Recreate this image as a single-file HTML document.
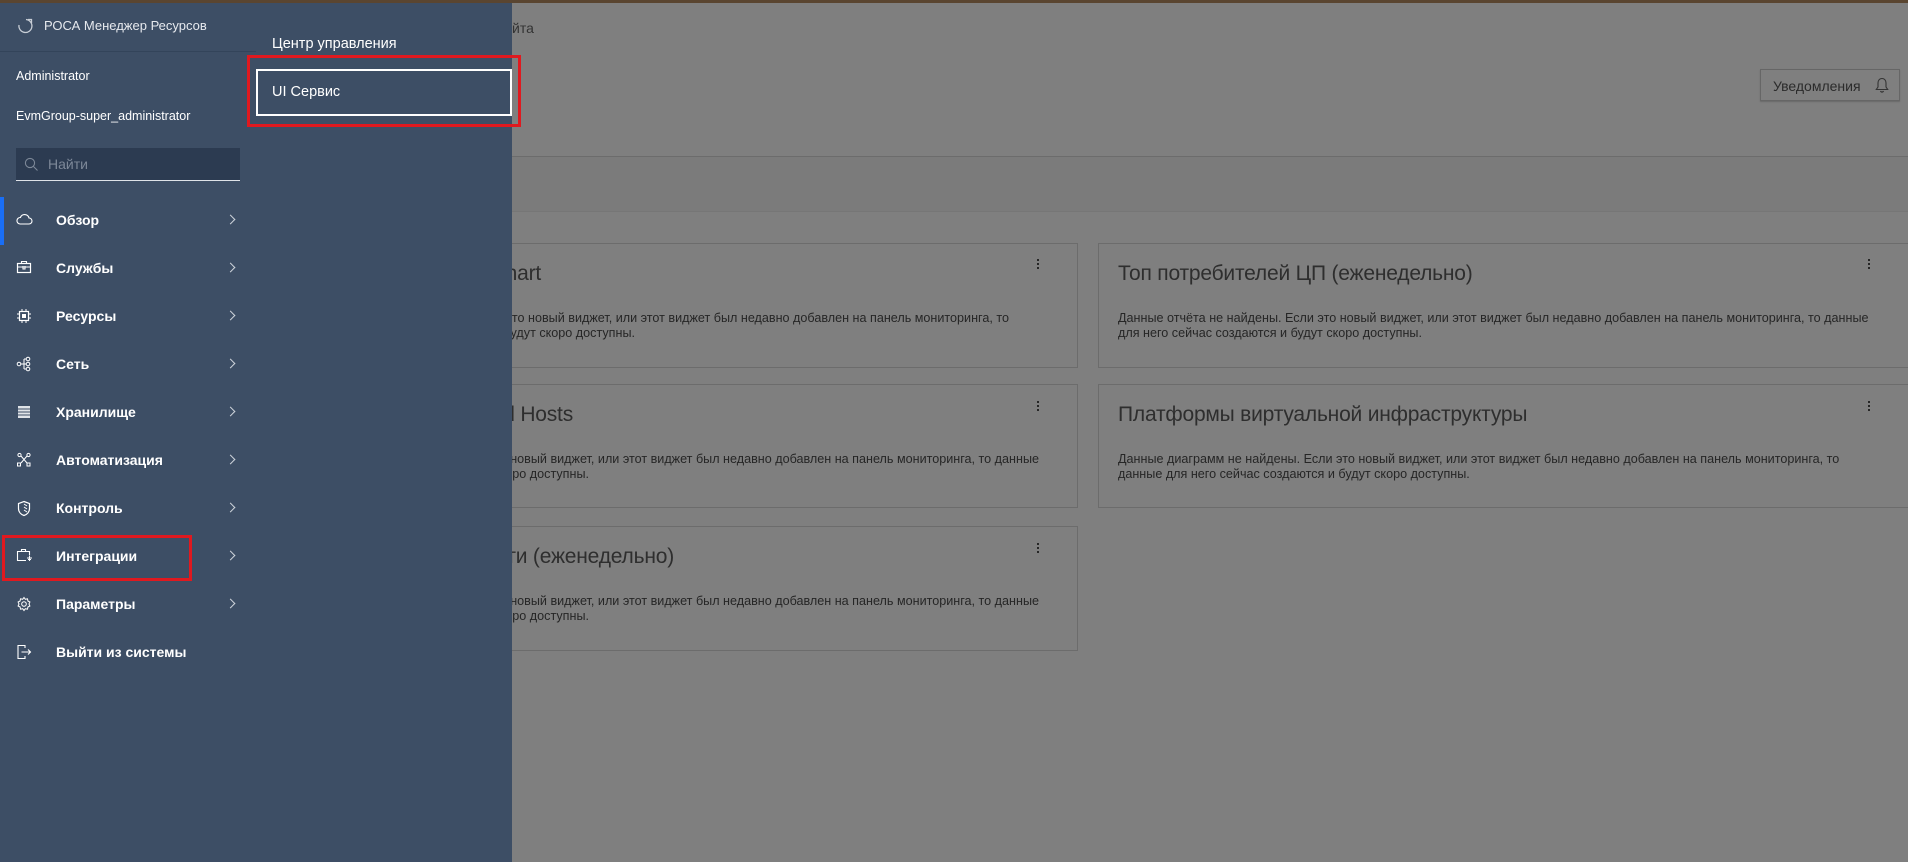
<!DOCTYPE html>
<html><head><meta charset="utf-8"><style>
*{margin:0;padding:0;box-sizing:border-box}
body{width:1908px;height:862px;overflow:hidden;background:#7f7f7f;font-family:"Liberation Sans","Noto Sans CJK SC",sans-serif;position:relative}
.abs{position:absolute;white-space:nowrap}
.topbar{left:0;top:0;width:1908px;height:3px;background:#5a4530}
.hl{position:absolute;height:1px;background:#6f6f6f}
.card{position:absolute;border:1px solid #6c6c6c;background:#7f7f7f}
.ttl{font-size:21px;color:#2e2e2e;font-weight:300;letter-spacing:-0.2px}
.bd{font-size:12.6px;color:#262626;line-height:15px}
.dots{position:absolute;width:3px}
.dots i{display:block;width:2px;height:2px;background:#262626;margin-bottom:2px}
.side{position:absolute;left:0;top:3px;width:512px;height:859px;background:#3d4e65}
.nav{position:absolute;left:0;width:256px;height:48px;color:#fff;font-weight:bold;font-size:14px}
.nav span{position:absolute;left:56px;top:15px}
.nav svg{position:absolute;left:16px;top:15px}
.nav .ch{position:absolute;left:227px;top:19px;width:7px;height:7px;border-top:1.3px solid #cdd3da;border-right:1.3px solid #cdd3da;transform:rotate(45deg)}
</style></head><body>
<div class="abs topbar"></div>
<div class="abs" style="left:512px;top:20px;font-size:14px;color:#333">йта</div>
<div class="abs" style="left:1760px;top:69px;width:140px;height:32px;border:1px solid #666;box-shadow:0 1px 1px #6a6a6a;font-size:14px;color:#2b2b2b;padding:8px 0 0 12px">Уведомления
<svg style="position:absolute;right:10px;top:7px" width="14" height="17" viewBox="0 0 14 17"><path d="M7 1.5C4.5 1.5 3 3.5 3 6v4L1.3 12.5h11.4L11 10V6C11 3.5 9.5 1.5 7 1.5ZM5.5 14a1.6 1.6 0 0 0 3 0" fill="none" stroke="#333" stroke-width="1.1"/></svg></div>
<div class="hl" style="left:0;top:156px;width:1908px;background:#6c6c6c"></div>
<div style="position:absolute;left:0;top:157px;width:1908px;height:54px;background:#7b7b7b"></div>
<div class="hl" style="left:0;top:211px;width:1908px;background:#767676"></div>

<div class="card" style="left:420px;top:243px;width:658px;height:125px"></div>
<div class="card" style="left:1098px;top:243px;width:820px;height:125px"></div>
<div class="card" style="left:420px;top:384px;width:658px;height:124px"></div>
<div class="card" style="left:1098px;top:384px;width:820px;height:124px"></div>
<div class="card" style="left:420px;top:526px;width:658px;height:125px"></div>

<div class="abs ttl" style="right:1367px;top:262px">Vendor and Guest OS Chart</div>
<div class="abs bd" style="right:899px;top:311px">Если это новый виджет, или этот виджет был недавно добавлен на панель мониторинга, то</div>
<div class="abs bd" style="right:1273px;top:326px">данные для него сейчас создаются и будут скоро доступны.</div>
<div class="abs ttl" style="left:1118px;top:262px">Топ потребителей ЦП (еженедельно)</div>
<div class="abs bd" style="left:1118px;top:311px">Данные отчёта не найдены. Если это новый виджет, или этот виджет был недавно добавлен на панель мониторинга, то данные<br>для него сейчас создаются и будут скоро доступны.</div>

<div class="abs ttl" style="right:1335px;top:403px">Guests and Hosts</div>
<div class="abs bd" style="right:869px;top:452px">Если это новый виджет, или этот виджет был недавно добавлен на панель мониторинга, то данные</div>
<div class="abs bd" style="right:1319px;top:467px">создаются и будут скоро доступны.</div>
<div class="abs ttl" style="left:1118px;top:403px">Платформы виртуальной инфраструктуры</div>
<div class="abs bd" style="left:1118px;top:452px">Данные диаграмм не найдены. Если это новый виджет, или этот виджет был недавно добавлен на панель мониторинга, то<br>данные для него сейчас создаются и будут скоро доступны.</div>

<div class="abs ttl" style="right:1234px;top:545px">Использование памяти (еженедельно)</div>
<div class="abs bd" style="right:869px;top:594px">Если это новый виджет, или этот виджет был недавно добавлен на панель мониторинга, то данные</div>
<div class="abs bd" style="right:1319px;top:609px">создаются и будут скоро доступны.</div>

<div class="dots" style="left:1037px;top:259px"><i></i><i></i><i></i></div>
<div class="dots" style="left:1868px;top:259px"><i></i><i></i><i></i></div>
<div class="dots" style="left:1037px;top:401px"><i></i><i></i><i></i></div>
<div class="dots" style="left:1868px;top:401px"><i></i><i></i><i></i></div>
<div class="dots" style="left:1037px;top:543px"><i></i><i></i><i></i></div>

<div class="side">
 <svg style="position:absolute;left:16px;top:14px" width="18" height="18" viewBox="0 0 18 18"><path d="M10 2.5A6.5 6.5 0 1 1 3 8" fill="none" stroke="#c8ced6" stroke-width="1.3"/><path d="M12 2.5h3.5V6" fill="none" stroke="#c8ced6" stroke-width="1.3"/></svg>
 <div class="abs" style="left:44px;top:15px;font-size:13px;color:#e6e9ee">РОСА Менеджер Ресурсов</div>
 <div style="position:absolute;left:0;top:48px;width:256px;height:1px;background:#33445a"></div>
 <div class="abs" style="left:16px;top:66px;font-size:12.5px;color:#fff">Administrator</div>
 <div class="abs" style="left:16px;top:106px;font-size:12.5px;color:#fff">EvmGroup-super_administrator</div>
 <div style="position:absolute;left:16px;top:145px;width:224px;height:33px;background:#2c3b51;border-bottom:1.5px solid #dfe3e8"></div>
 <svg style="position:absolute;left:24px;top:154px" width="15" height="15" viewBox="0 0 15 15"><circle cx="6" cy="6" r="4.6" fill="none" stroke="#7d8898" stroke-width="1.1"/><path d="M9.5 9.5l4 4" stroke="#7d8898" stroke-width="1.1"/></svg>
 <div class="abs" style="left:48px;top:153px;font-size:14px;color:#7d8898">Найти</div>
 <div style="position:absolute;left:0;top:194px;width:4px;height:48px;background:#1a6ef5"></div>

 <div class="nav" style="top:194px"><svg width="17" height="14" viewBox="0 0 17 14"><path d="M4 12h9a3 3 0 0 0 0-6 4.5 4.5 0 0 0-8.6-.5A3.2 3.2 0 0 0 4 12Z" fill="none" stroke="#fff" stroke-width="1.1"/></svg><span>Обзор</span><i class="ch"></i></div>
 <div class="nav" style="top:242px"><svg width="16" height="14" viewBox="0 0 16 14"><rect x="1.5" y="3.5" width="13" height="9" fill="none" stroke="#fff" stroke-width="1.2"/><path d="M5.5 3.5V1.5h5v2M1.5 7h13M7 6v3h2V6" fill="none" stroke="#fff" stroke-width="1.1"/></svg><span>Службы</span><i class="ch"></i></div>
 <div class="nav" style="top:290px"><svg width="16" height="16" viewBox="0 0 16 16"><rect x="3.5" y="3.5" width="9" height="9" fill="none" stroke="#fff" stroke-width="1.2"/><rect x="6" y="6" width="4" height="4" fill="#fff"/><path d="M6 1v2M10 1v2M6 13v2M10 13v2M1 6h2M1 10h2M13 6h2M13 10h2" stroke="#fff"/></svg><span>Ресурсы</span><i class="ch"></i></div>
 <div class="nav" style="top:338px"><svg width="16" height="16" viewBox="0 0 16 16"><circle cx="3" cy="8" r="1.8" fill="none" stroke="#fff"/><circle cx="12" cy="3" r="1.8" fill="none" stroke="#fff"/><circle cx="12" cy="8" r="1.8" fill="none" stroke="#fff"/><circle cx="12" cy="13" r="1.8" fill="none" stroke="#fff"/><path d="M5 8h5M8 3v10M8 3h2M8 13h2" stroke="#fff"/></svg><span>Сеть</span><i class="ch"></i></div>
 <div class="nav" style="top:386px"><svg width="16" height="16" viewBox="0 0 16 16"><rect x="2" y="2" width="12" height="12" fill="#dfe3e8"/><path d="M2 5h12M2 8h12M2 11h12" stroke="#3d4e65"/></svg><span>Хранилище</span><i class="ch"></i></div>
 <div class="nav" style="top:434px"><svg width="16" height="16" viewBox="0 0 16 16"><circle cx="3.5" cy="3" r="1.6" fill="none" stroke="#fff"/><circle cx="12.5" cy="3" r="1.6" fill="none" stroke="#fff"/><rect x="1.5" y="11" width="3" height="3" fill="none" stroke="#fff"/><rect x="11" y="11" width="3" height="3" fill="none" stroke="#fff"/><path d="M5 4l6 7M11 4l-6 7" stroke="#fff"/></svg><span>Автоматизация</span><i class="ch"></i></div>
 <div class="nav" style="top:482px"><svg width="16" height="17" viewBox="0 0 16 17"><path d="M8 1.5l5.5 2v5c0 3.5-2.5 6-5.5 7-3-1-5.5-3.5-5.5-7v-5Z" fill="none" stroke="#fff" stroke-width="1.2"/><path d="M8 4l3 2M8 7l3 2M8 10l3 2" stroke="#fff"/></svg><span>Контроль</span><i class="ch"></i></div>
 <div class="nav" style="top:530px"><svg width="17" height="15" viewBox="0 0 17 15"><path d="M10 12.5H1.5v-9h12v4M5.5 3.5V1.5h4v2" fill="none" stroke="#fff" stroke-width="1.1"/><path d="M11 10h5M13.5 8v5M12 11.5h3" stroke="#fff" stroke-width="1.1"/></svg><span>Интеграции</span><i class="ch"></i></div>
 <div class="nav" style="top:578px"><svg width="16" height="16" viewBox="0 0 16 16"><circle cx="8" cy="8" r="2.3" fill="none" stroke="#fff"/><path d="M8 1.5l1.3 1.8 2.2-.5.4 2.2 2 1-.9 2 .9 2-2 1-.4 2.2-2.2-.5L8 14.5l-1.3-1.8-2.2.5-.4-2.2-2-1 .9-2-.9-2 2-1 .4-2.2 2.2.5Z" fill="none" stroke="#fff"/></svg><span>Параметры</span><i class="ch"></i></div>
 <div class="nav" style="top:626px"><svg width="16" height="16" viewBox="0 0 16 16"><path d="M9 4V1.5H2v13h7V12M5.5 8h9M12 5.5 14.5 8 12 10.5" fill="none" stroke="#fff" stroke-width="1.1"/></svg><span>Выйти из системы</span></div>

 <div style="position:absolute;left:2px;top:532px;width:190px;height:46px;border:3px solid #e0191f"></div>

 <div class="abs" style="left:272px;top:33px;font-size:14.5px;color:#fff">Центр управления</div>
 <div style="position:absolute;left:247px;top:52px;width:274px;height:72px;border:3px solid #e0191f"></div>
 <div style="position:absolute;left:256px;top:66px;width:256px;height:47px;border:2px solid #fff"></div>
 <div class="abs" style="left:272px;top:81px;font-size:14.5px;color:#fff">UI Сервис</div>
</div>
</body></html>
